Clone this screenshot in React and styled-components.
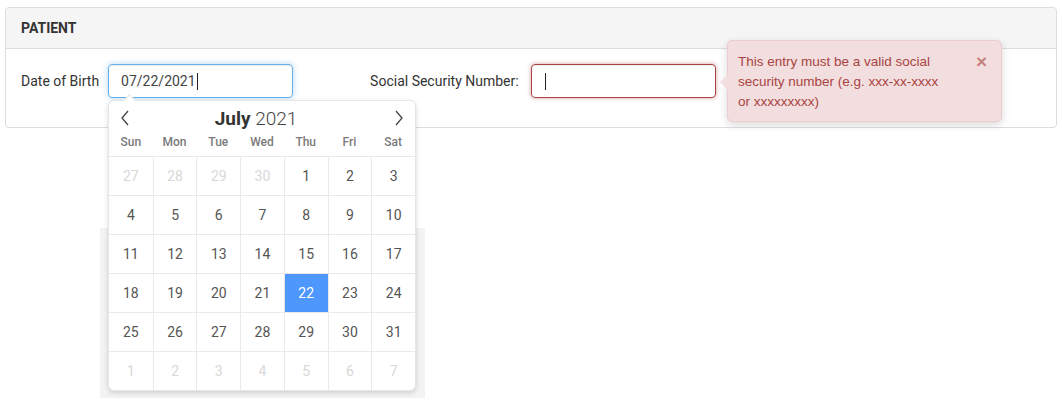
import React, { useState } from "react"
import styled, { createGlobalStyle } from "styled-components"

const GlobalStyle = createGlobalStyle`
  html, body {
    margin: 0;
    background: #fff;
    font-family: Roboto, "Liberation Sans", sans-serif;
    color: #333;
  }
  * { box-sizing: border-box; }
`

const Page = styled.div`
  padding: 7px 5px 0 5px;
  width: 1062px;
  height: 405px;
  position: relative;
`

const Panel = styled.section`
  border: 1px solid #ddd;
  border-radius: 4px;
  background: #fff;
`

const PanelHeading = styled.div`
  background: #f5f5f5;
  border-bottom: 1px solid #ddd;
  border-radius: 4px 4px 0 0;
  height: 41px;
  padding: 0 15px;
  display: flex;
  align-items: center;
  font-size: 14px;
  font-weight: 700;
  color: #333;
`

const PanelBody = styled.div`
  padding: 15px 15px 29px 15px;
  display: flex;
  align-items: center;
`

const Group = styled.div`
  position: relative;
  display: flex;
  align-items: center;
  gap: ${props => props.gap}px;
  margin-right: ${props => props.after || 0}px;
`

const Label = styled.label`
  font-size: 14px;
  color: #333;
`

const Input = styled.div`
  width: 185px;
  height: 34px;
  border-radius: 4px;
  border: 1px solid ${props => (props.invalid ? "#a94442" : "#66afe9")};
  box-shadow: ${props =>
    props.invalid
      ? "inset 0 1px 1px rgba(0,0,0,.075), 0 0 4px rgba(169,68,66,.5)"
      : "inset 0 1px 1px rgba(0,0,0,.075), 0 0 6px rgba(102,175,233,.5)"};
  padding: 0 12px;
  display: flex;
  align-items: center;
  font-size: 14px;
  color: #444;
`

const Caret = styled.span`
  display: inline-block;
  width: 1px;
  height: 17px;
  background: #222;
  margin-left: 1px;
`

const Backdrop = styled.div`
  position: absolute;
  left: 100px;
  top: 228px;
  width: 325px;
  height: 170px;
  background: #f3f3f3;
`

const Popup = styled.div`
  position: absolute;
  left: 108px;
  top: 100px;
  width: 308px;
  background: #fff;
  border: 1px solid #e6e6e6;
  border-radius: 6px;
  box-shadow: 0 2px 5px rgba(0,0,0,.15);
  z-index: 2;
  &:before {
    content: "";
    position: absolute;
    top: -5px;
    left: 16px;
    width: 8px;
    height: 8px;
    background: #fff;
    border-left: 1px solid #e6e6e6;
    border-top: 1px solid #e6e6e6;
    transform: rotate(45deg);
  }
`

const CalHeader = styled.div`
  height: 34px;
  display: flex;
  align-items: center;
  justify-content: space-between;
  padding: 0 10px;
`

const NavButton = styled.span`
  width: 12px;
  display: flex;
  justify-content: center;
  color: #444;
`

const Title = styled.div`
  font-size: 19px;
  color: #444;
  margin-right: 12px;
  b { font-weight: 700; color: #333; }
  span { font-weight: 300; }
`

const Grid = styled.div`
  display: grid;
  grid-template-columns: repeat(7, 1fr);
`

const DayName = styled.div`
  height: 21px;
  display: flex;
  align-items: flex-start;
  justify-content: center;
  font-size: 12px;
  font-weight: 500;
  color: #7a7a7a;
`

const Cell = styled.div`
  height: 39px;
  display: flex;
  align-items: center;
  justify-content: center;
  font-size: 14px;
  border-top: 1px solid #eaeaea;
  border-left: ${props => (props.first ? "none" : "1px solid #eaeaea")};
  color: ${props => (props.selected ? "#fff" : props.muted ? "#d8d8d8" : "#555")};
  background: ${props => (props.selected ? "#4d97fd" : "transparent")};
`

const Tooltip = styled.div`
  position: absolute;
  left: 727px;
  top: 40px;
  width: 275px;
  height: 82px;
  background: #f2dede;
  border: 1px solid #ebccd1;
  border-radius: 5px;
  box-shadow: 0 3px 8px rgba(0,0,0,.15);
  padding: 11px 12px 0 10px;
  color: #a94442;
  font-family: "Liberation Sans", Arial, sans-serif;
  font-size: 13.5px;
  line-height: 20px;
  display: flex;
  justify-content: space-between;
  &:before {
    content: "";
    position: absolute;
    left: -8px;
    top: 33px;
    border-top: 8px solid transparent;
    border-bottom: 8px solid transparent;
    border-right: 8px solid #f2dede;
  }
`

const TipText = styled.div`
  width: 215px;
`

const Close = styled.span`
  font-size: 19px;
  font-weight: 700;
  color: #c7817f;
  line-height: 20px;
  margin-right: 2px;
`

const Chevron = ({ dir }) => (
  <svg width="10" height="16" viewBox="0 0 10 16">
    <path
      d={dir === "left" ? "M8 1 L2 8 L8 15" : "M2 1 L8 8 L2 15"}
      fill="none"
      stroke="#444"
      strokeWidth="1.3"
    />
  </svg>
)

const dayNames = ["Sun", "Mon", "Tue", "Wed", "Thu", "Fri", "Sat"]

const buildDays = () => {
  const days = [27, 28, 29, 30].map(d => ({ d, muted: true }))
  for (let i = 1; i <= 31; i++) days.push({ d: i })
  for (let i = 1; i <= 7; i++) days.push({ d: i, muted: true })
  return days
}

export default function App() {
  const [selected] = useState(22)
  const days = buildDays()

  return (
    <Page>
      <GlobalStyle />
      <Panel>
        <PanelHeading>PATIENT</PanelHeading>
        <PanelBody>
          <Group gap={9} after={77}>
            <Label>Date of Birth</Label>
            <Input>
              07/22/2021<Caret />
            </Input>
          </Group>
          <Group gap={12}>
            <Label>Social Security Number:</Label>
            <Input invalid>
              <Caret />
            </Input>
          </Group>
        </PanelBody>
      </Panel>

      <Backdrop />
      <Popup>
        <CalHeader>
          <NavButton><Chevron dir="left" /></NavButton>
          <Title><b>July</b> <span>2021</span></Title>
          <NavButton><Chevron dir="right" /></NavButton>
        </CalHeader>
        <Grid>
          {dayNames.map(n => (
            <DayName key={n}>{n}</DayName>
          ))}
          {days.map((item, key) => (
            <Cell
              key={key}
              first={key % 7 === 0}
              muted={item.muted}
              selected={!item.muted && item.d === selected}
            >
              {item.d}
            </Cell>
          ))}
        </Grid>
      </Popup>

      <Tooltip>
        <TipText>
          This entry must be a valid social security number (e.g. xxx-xx-xxxx
          or xxxxxxxxx)
        </TipText>
        <Close>×</Close>
      </Tooltip>
    </Page>
  )
}
